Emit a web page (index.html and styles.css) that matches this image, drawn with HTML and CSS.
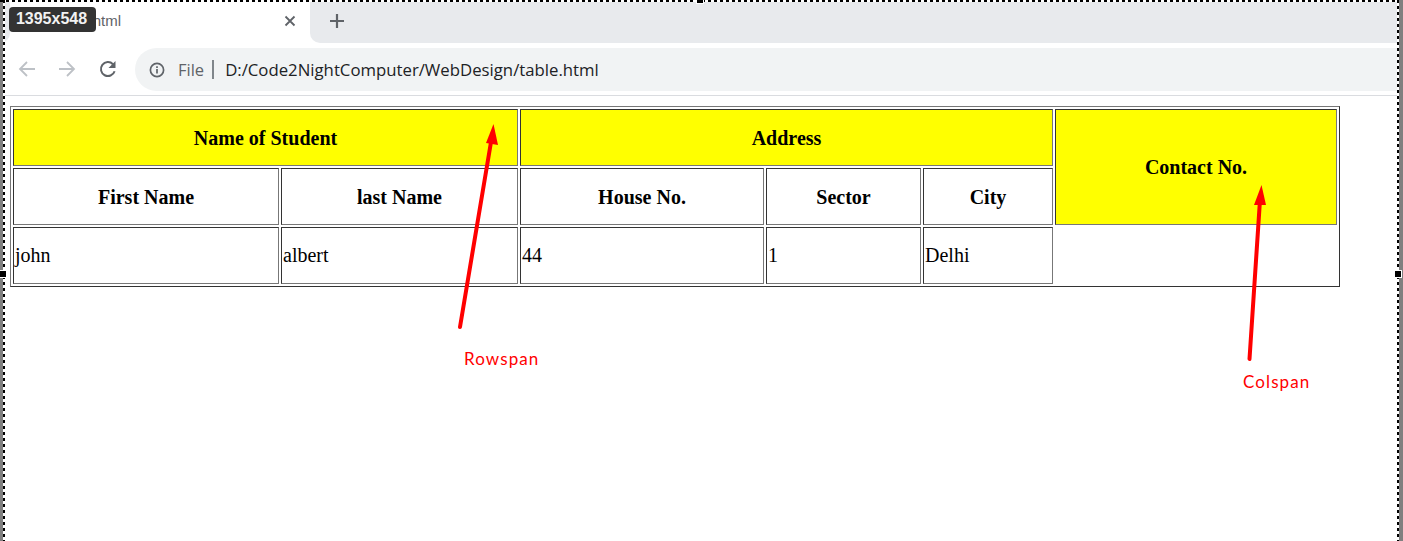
FILE: index.html
```html
<!DOCTYPE html>
<html lang="en">
<head>
<meta charset="utf-8">
<title>table.html</title>
<link rel="stylesheet" href="styles.css">
</head>
<body>
<div class="shot">
  <div class="tabstrip">
    <div class="tab-edge"></div>
    <div class="tab">
      <svg class="favicon" width="16" height="16" viewBox="0 0 16 16"><circle cx="8" cy="8" r="6.5" fill="none" stroke="#5f6368" stroke-width="2"/></svg>
      <span class="tab-title">table.html</span>
      <svg class="tab-close" width="12" height="12" viewBox="0 0 12 12"><path d="M1.500 1.500l9 9M10.500 1.500l-9 9" stroke="#5f6368" stroke-width="1.800" fill="none"/></svg>
    </div>
    <div class="tab-rest">
      <svg class="new-tab" width="16" height="16" viewBox="0 0 16 16"><path d="M8 1v14M1 8h14" stroke="#5f6368" stroke-width="2.200" fill="none"/></svg>
    </div>
  </div>
  <div class="toolbar">
    <svg class="nav" width="18" height="18" viewBox="0 0 18 18"><path d="M17 9H2M9 2L2 9l7 7" stroke="#bdc1c6" stroke-width="1.800" fill="none"/></svg>
    <svg class="nav" width="18" height="18" viewBox="0 0 18 18"><path d="M1 9h15M9 2l7 7-7 7" stroke="#bdc1c6" stroke-width="1.800" fill="none"/></svg>
    <svg class="nav" width="20" height="20" viewBox="0 0 20 20"><path d="M16.600 12.200A7 7 0 1 1 15 5.200" stroke="#5f6368" stroke-width="2" fill="none"/><path d="M17.500 2v7h-7z" fill="#5f6368"/></svg>
    <div class="omnibox">
      <svg class="info" width="16" height="16" viewBox="0 0 16 16"><circle cx="8" cy="8" r="6.600" fill="none" stroke="#5f6368" stroke-width="1.700"/><path d="M8 7v4.600M8 4.200v1.700" stroke="#5f6368" stroke-width="1.700" fill="none"/></svg>
      <span class="scheme">File</span>
      <span class="divider"></span>
      <span class="url">D:/Code2NightComputer/WebDesign/table.html</span>
    </div>
  </div>
  <div class="page">
    <table class="data">
      <colgroup>
        <col class="c1"><col class="c2"><col class="c3"><col class="c4"><col class="c5"><col class="c6">
      </colgroup>
      <tr>
        <th colspan="2" class="hl low">Name of Student</th>
        <th colspan="3" class="hl low">Address</th>
        <th rowspan="2" class="hl">Contact No.</th>
      </tr>
      <tr>
        <th class="low">First Name</th>
        <th class="low">last Name</th>
        <th class="low">House No.</th>
        <th class="low">Sector</th>
        <th class="low">City</th>
      </tr>
      <tr>
        <td>john</td>
        <td>albert</td>
        <td>44</td>
        <td>1</td>
        <td>Delhi</td>
      </tr>
    </table>
  </div>

  <svg class="arrows" width="1403" height="541" viewBox="0 0 1403 541">
    <path d="M460 327L491 142" stroke="#ff0000" stroke-width="4" stroke-linecap="round" fill="none"/>
    <path d="M493.500 124L498 145L486 143z" fill="#ff0000"/>
    <path d="M1249.500 359L1260 200" stroke="#ff0000" stroke-width="4" stroke-linecap="round" fill="none"/>
    <path d="M1261.500 185L1266 205L1254 205z" fill="#ff0000"/>
  </svg>
  <span class="note note-row">Rowspan</span>
  <span class="note note-col">Colspan</span>

  <div class="badge">1395x548</div>
  <div class="outside outside-left"></div>
  <div class="outside outside-right"></div>
  <div class="sel sel-top"></div>
  <div class="sel sel-left"></div>
  <div class="sel sel-right"></div>
  <span class="handle h-top"></span>
  <span class="handle h-left"></span>
  <span class="handle h-right"></span>
</div>
</body>
</html>
```
FILE: styles.css
```css
html, body { margin: 0; padding: 0; background: #fff; }
body { width: 1403px; height: 541px; overflow: hidden; }
.shot { position: relative; width: 1403px; height: 541px; overflow: hidden; font-family: "Open Sans", sans-serif; }

.tabstrip { height: 43px; background: #fff; display: flex; align-items: stretch; }
.tab-edge { width: 10px; background: #e8eaed; border-bottom-right-radius: 10px; }
.tab { width: 300px; background: #fff; display: flex; align-items: center; box-sizing: border-box; padding: 0 14px 2px 17px; }
.favicon { flex: none; margin-right: 13px; }
.tab-title { flex: 1; font: 15px "Liberation Sans", sans-serif; color: #5f6368; }
.tab-close { flex: none; }
.tab-rest { flex: 1; background: #e8eaed; border-bottom-left-radius: 10px; display: flex; align-items: center; padding: 0 0 2px 19px; }

.toolbar { height: 52px; border-bottom: 1px solid #dadce0; display: flex; align-items: center; padding-left: 18px; background: #fff; }
.nav { flex: none; margin-right: 22px; margin-bottom: 1px; }
.omnibox { flex: 1; height: 43px; margin-left: -5px; align-self: flex-start; margin-top: 5px; background: #f1f3f4; border-radius: 22px 0 0 22px; display: flex; align-items: center; padding-left: 14px; }
.info { flex: none; }
.scheme { margin-left: 13px; font: 16.500px "Open Sans", sans-serif; color: #5f6368; }
.divider { width: 2px; height: 19px; background: #80868b; margin: 0 11px 0 8px; }
.url { font: 16.750px "Open Sans", sans-serif; color: #202124; }

.page { padding: 10px 0 0 10px; }
.data { width: 1330px; height: 181px; border: 1px solid; border-color: #777 #333 #333 #777; border-spacing: 2px; border-collapse: separate; table-layout: fixed; font-family: "Liberation Serif", serif; font-size: 20px; color: #000; }
.data th, .data td { border: 1px solid; border-color: #333 #777 #777 #333; padding: 1px; }
.data td { text-align: left; font-weight: 400; }
.data th { text-align: center; font-weight: 700; }
.data th.low { padding: 2px 1px 0; }
.hl { background: #ff0; }
.c1 { width: 266px; }
.c2 { width: 237px; }
.c3 { width: 244px; }
.c4 { width: 155px; }
.c5 { width: 130px; }
.c6 { width: 282px; }

.arrows { position: absolute; left: 0; top: 0; pointer-events: none; }
.note { position: absolute; font: 400 17px "Lato", sans-serif; color: #ff0000; letter-spacing: 1.100px; }
.note-row { left: 464px; top: 348px; }
.note-col { left: 1243px; top: 371px; }

.badge { position: absolute; left: 9px; top: 7px; width: 87px; height: 25px; box-sizing: border-box; padding-right: 2px; text-align: center; background: #333; color: #f2f2f2; border-radius: 4px; font: 700 16px/24px "Liberation Sans", sans-serif; }

.outside { position: absolute; top: 0; height: 541px; background: #808080; }
.outside-left { left: 0; width: 3px; }
.outside-right { left: 1398px; width: 5px; }
.sel { position: absolute; }
.sel-top { left: 0; top: 0; width: 1398px; height: 2px; background: repeating-linear-gradient(90deg, #000 0 3px, #fff 3px 6px); }
.sel-left { left: 3px; top: 0; width: 2px; height: 541px; background: repeating-linear-gradient(180deg, #000 0 3px, #fff 3px 6px); }
.sel-right { left: 1397px; top: 0; width: 2px; height: 541px; background: repeating-linear-gradient(180deg, #000 0 3px, #fff 3px 6px); }
.handle { position: absolute; background: #000; width: 6px; height: 6px; box-shadow: 0 0 0 1px #fff; }
.h-top { left: 697px; top: -3px; }
.h-left { left: 0; top: 271px; }
.h-right { left: 1395px; top: 271px; }
```
